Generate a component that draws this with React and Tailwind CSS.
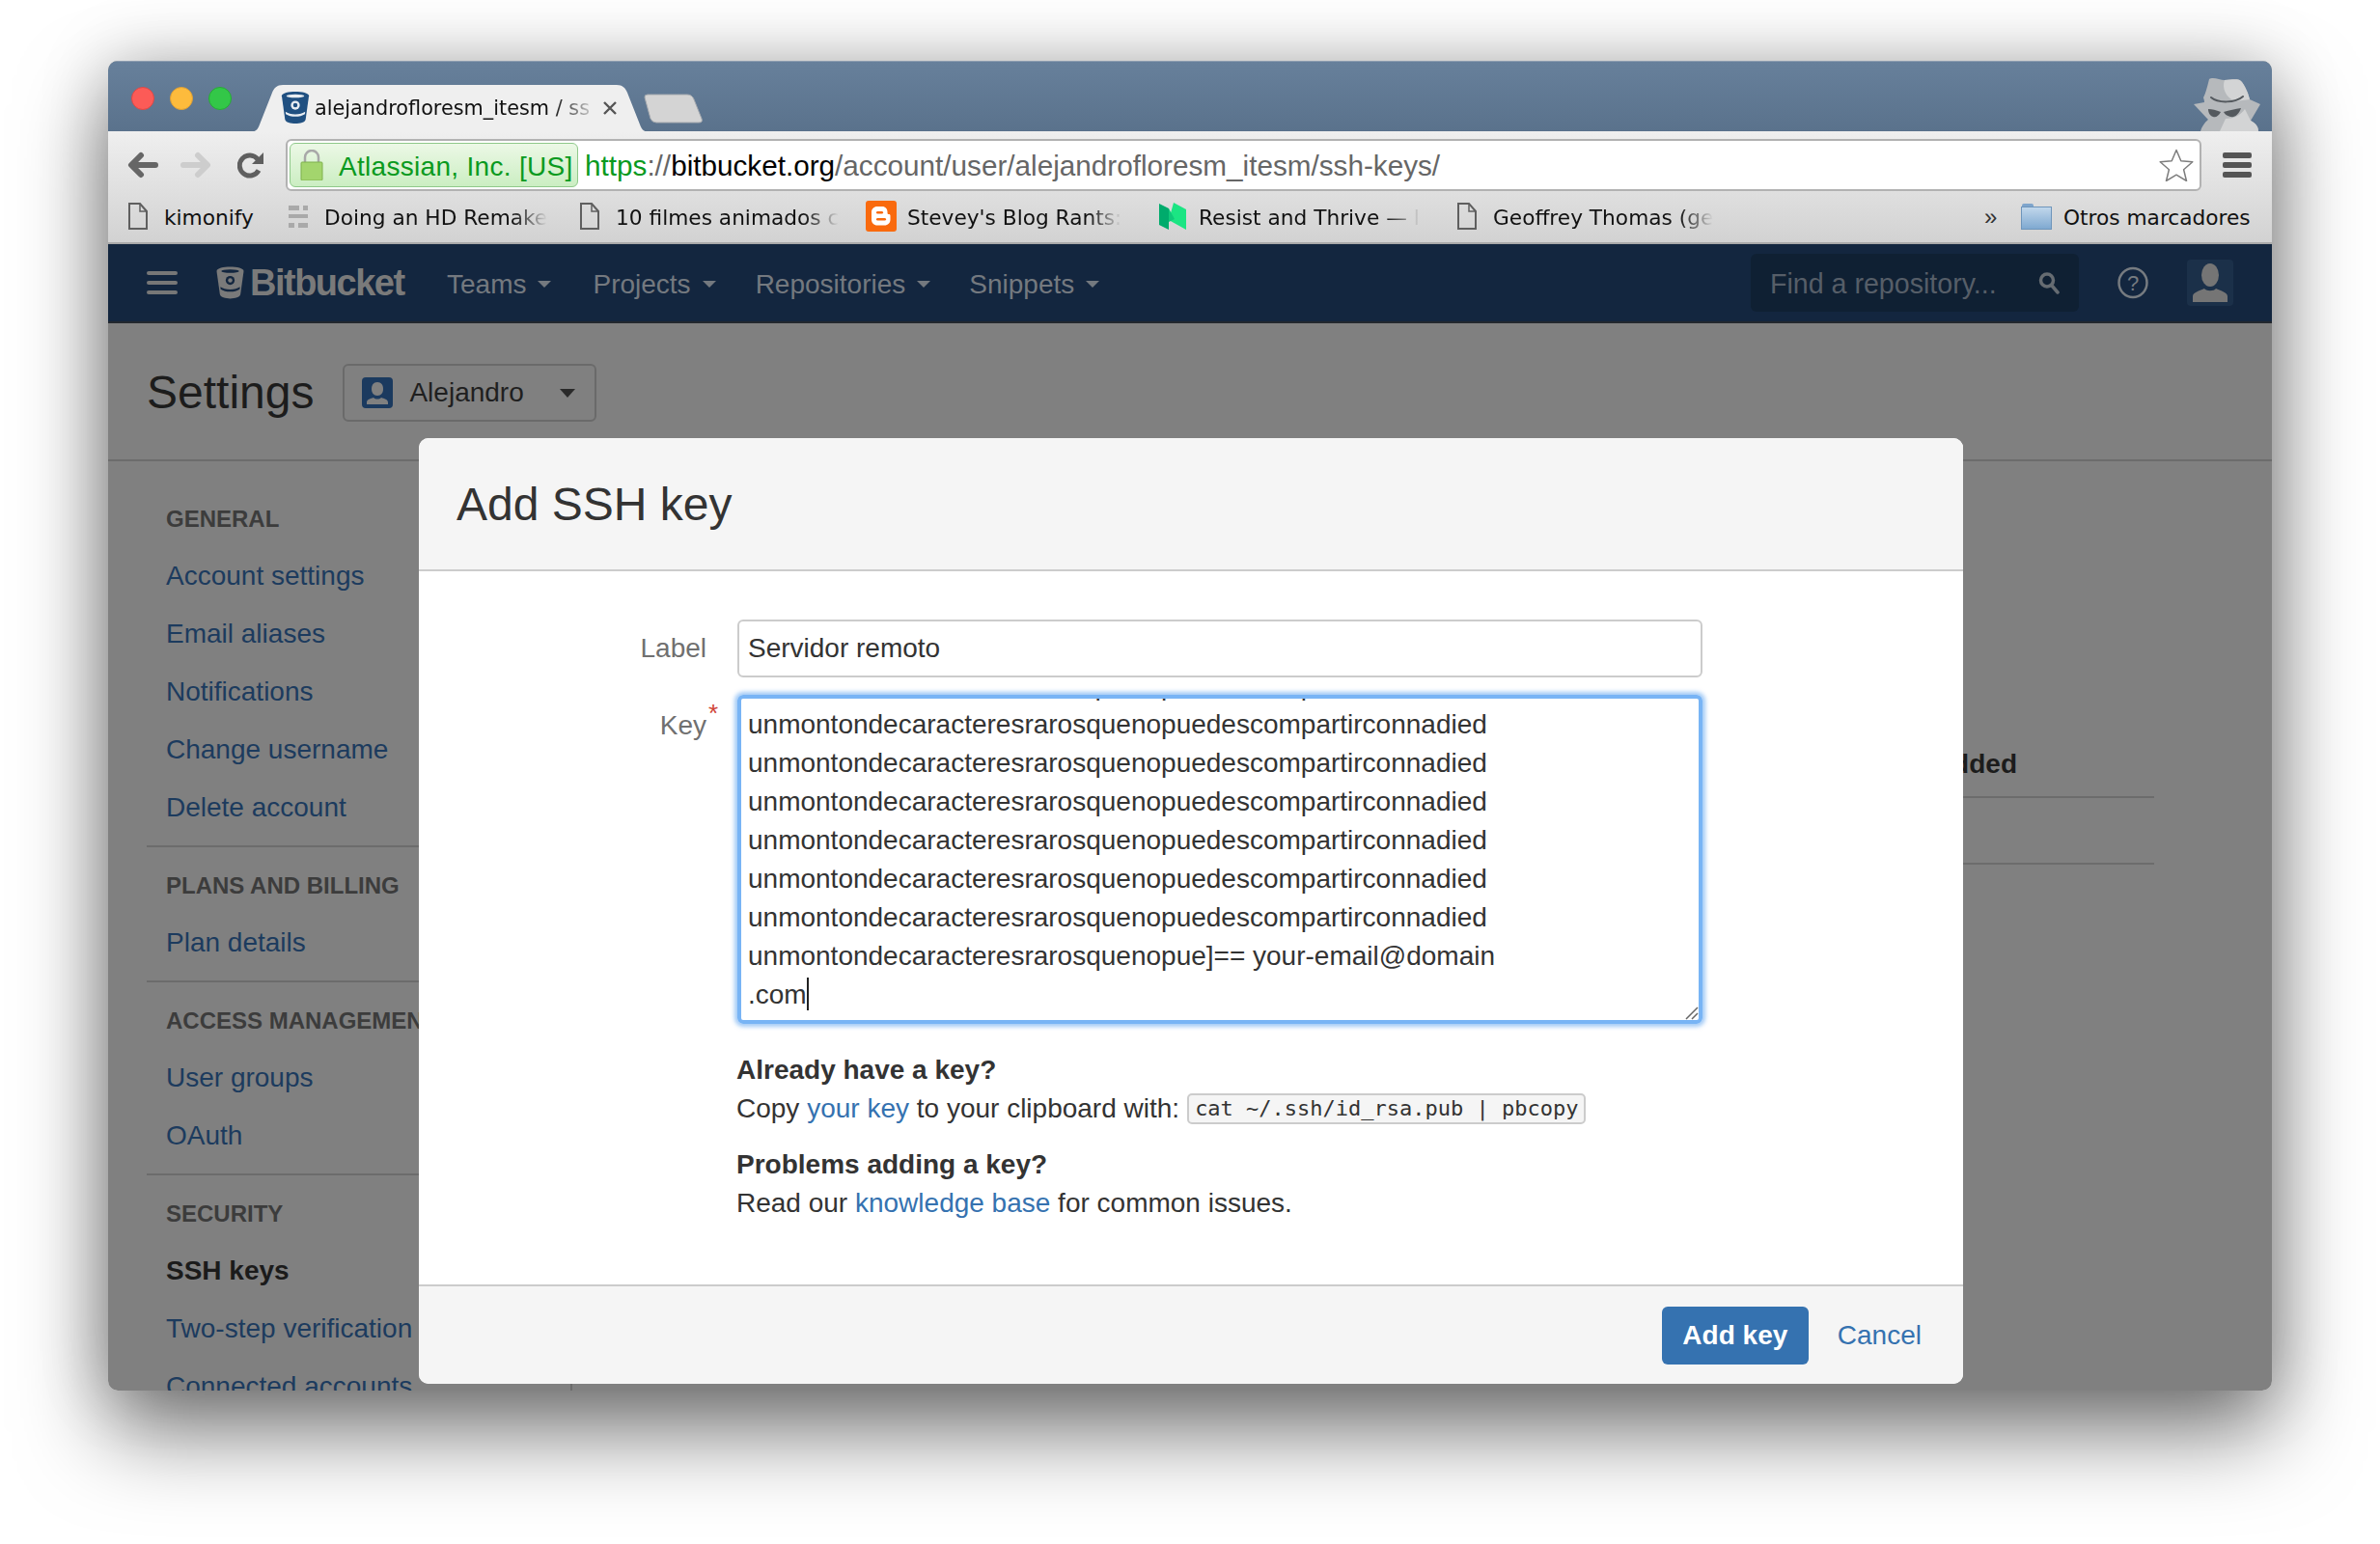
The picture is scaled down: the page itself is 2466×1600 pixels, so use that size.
import React from 'react';

const sans = 'font-["Liberation_Sans",Arial,sans-serif]';

const BucketIcon = ({ className, body, inner }) => (
  <svg viewBox="0 0 30 34" className={className}>
    <path d="M0.5 4.5C0.5 1.5 8 0 15 0s14.500 1.500 14.500 4.500L26 29.500C25.500 32.500 20 34 15 34S4.500 32.500 4 29.500Z" fill={body} />
    <ellipse cx="15" cy="4.600" rx="9.500" ry="1.800" fill={inner} />
    <path d="M4.500 21.500C9 25 21 25 25.500 21.500L25.200 24C20.500 27.500 9.500 27.500 4.800 24Z" fill={inner} />
    <circle cx="15" cy="14.500" r="4.800" fill={inner} />
    <circle cx="15" cy="14.500" r="2.300" fill={body} />
  </svg>
);

const DocIcon = () => (
  <svg viewBox="0 0 20 28" className="w-[20px] h-[28px]" fill="none" stroke="#5f5f5f" strokeWidth="2">
    <path d="M1 1h11l7 8v18H1Z" />
    <path d="M12 1v8h7" strokeWidth="1.500" />
  </svg>
);

const ListIcon = () => (
  <svg viewBox="0 0 20 28" className="w-[20px] h-[28px]" fill="#a9a9a9">
    <rect x="0" y="3" width="11" height="5" />
    <rect x="15" y="3" width="5" height="5" />
    <rect x="0" y="12" width="20" height="4" />
    <rect x="0" y="21" width="6" height="5" />
    <rect x="10" y="21" width="10" height="5" />
  </svg>
);

const BloggerIcon = () => (
  <svg viewBox="0 0 32 32" className="w-[32px] h-[32px]">
    <rect width="32" height="32" rx="3" fill="#f96a0e" />
    <path d="M12 6h5c3.500 0 5.500 2.500 5.500 5.500v1c0 1 .6 1.500 1.500 1.500.8 0 1.500.5 1.500 1.500v4c0 3.500-2.500 6-6 6H12c-3.500 0-6-2.500-6-6v-8C6 8.500 8.500 6 12 6Z" fill="#fff" />
    <rect x="11" y="11" width="7" height="2.500" rx="1.200" fill="#f96a0e" />
    <rect x="11" y="18" width="10" height="2.500" rx="1.200" fill="#f96a0e" />
  </svg>
);

const MediumIcon = () => (
  <svg viewBox="0 0 28 28" className="w-[28px] h-[28px]">
    <path d="M0 1l10 5v22L0 23Z" fill="#00ab6c" />
    <path d="M15 0l13 7v21L10 18Z" fill="#1be583" />
    <path d="M10 6l6 11-6 3Z" fill="#0fc97a" />
  </svg>
);

const FolderIcon = () => (
  <svg viewBox="0 0 32 28" className="w-[32px] h-[28px]">
    <path d="M1 3q0-2 2-2h8q2 0 2 2v1H1Z" fill="#7fa5cc" />
    <defs>
      <linearGradient id="folderFill" x1="0" y1="0" x2="0" y2="1">
        <stop offset="0" stopColor="#c2d8ec" />
        <stop offset="1" stopColor="#7ea8d0" />
      </linearGradient>
    </defs>
    <rect x="0.500" y="4.500" width="31" height="23" fill="url(#folderFill)" stroke="#6e95bb" />
  </svg>
);

const Bookmark = ({ icon, text, className, fade }) => (
  <div className={`flex items-center shrink-0 ${className}`}>
    <div className="w-[37px] flex items-center">{icon}</div>
    <span
      className={`whitespace-nowrap pt-[4px] font-["DejaVu_Sans",sans-serif] text-[21.700px] ${
        fade ? 'bg-linear-to-r from-[#111] from-[84%] to-[#d8d8d8] bg-clip-text text-transparent' : 'text-[#111]'
      }`}
    >
      {text}
    </span>
  </div>
);

const Caret = ({ className }) => (
  <span className={`inline-block w-0 h-0 border-x-[7px] border-x-transparent border-t-[7px] ${className}`} />
);

const NavLink = ({ children, className }) => (
  <div className={`flex items-center gap-[12px] pt-[3px] text-[28px] text-[#74797f] ${className}`}>
    {children}
    <Caret className="border-t-[#74797f]" />
  </div>
);

const SideHeading = ({ children }) => (
  <div className="h-[59px] flex items-center text-[24px] font-bold text-[#3c3c3c] whitespace-nowrap">{children}</div>
);

const SideLink = ({ children, active }) => (
  <div className={`h-[60px] flex items-center text-[28px] whitespace-nowrap ${active ? 'font-bold text-[#1b1b1b]' : 'text-[#1c3b5e]'}`}>
    {children}
  </div>
);

const SideSection = ({ title, items, last }) => (
  <div className={`-ml-[20px] pl-[20px] ${last ? '' : 'pb-[9px] mb-[10px] border-b-2 border-[#6c6c6c]'}`}>
    <SideHeading>{title}</SideHeading>
    {items.map((it) => (
      <SideLink key={it} active={it === 'SSH keys'}>{it}</SideLink>
    ))}
  </div>
);

const keyLine = 'unmontondecaracteresrarosquenopuedescompartirconnadied';

export default function App() {
  return (
    <div className={`w-[2466px] h-[1600px] bg-white pt-[63px] pl-[112px] overflow-hidden ${sans}`}>
      <div className="relative w-[2242px] h-[1378px] rounded-[10px] shadow-[0_44px_90px_rgba(0,0,0,0.5),0_0_70px_rgba(0,0,0,0.22)]">
        <div className="relative w-full h-full rounded-[10px] overflow-hidden flex flex-col bg-[#808080]">
          {/* title bar */}
          <div className="h-[73px] shrink-0 flex items-start bg-linear-to-b from-[#67809b] to-[#5a728c] border-t border-[#8d9db0] relative">
            <div className="flex gap-[16px] pl-[24px] pt-[26px]">
              <span className="w-[24px] h-[24px] rounded-full bg-[#fc5b57] border border-[#df4744]" />
              <span className="w-[24px] h-[24px] rounded-full bg-[#fdbb3c] border border-[#de9f34]" />
              <span className="w-[24px] h-[24px] rounded-full bg-[#33c748] border border-[#27aa35]" />
            </div>
            {/* tab */}
            <div className="relative ml-[18px] mt-[24px] w-[416px] h-[48px] shrink-0">
              <svg viewBox="0 0 416 49" className="absolute inset-0 w-[416px] h-[49px]">
                <path d="M0 49c6 0 9-2 11-8L24 8c2-5 5-8 11-8h346c6 0 9 3 11 8l13 33c2 6 5 8 11 8Z" fill="#efefef" />
              </svg>
              <div className="relative h-full flex items-center pl-[33px] pr-[35px]">
                <BucketIcon className="w-[30px] h-[33px] -mt-[1px] shrink-0" body="#205081" inner="#e8edf2" />
                <span className={`ml-[5px] whitespace-nowrap pt-[1px] font-["DejaVu_Sans",sans-serif] text-[20.800px] bg-linear-to-r from-[#111] from-[86%] to-[#c4c4c4] bg-clip-text text-transparent`}>
                  alejandrofloresm_itesm / ss
                </span>
                <svg viewBox="0 0 14 14" className="w-[14px] h-[14px] ml-auto shrink-0" stroke="#555" strokeWidth="2.400">
                  <path d="M1 1l12 12M13 1L1 13" />
                </svg>
              </div>
            </div>
            <svg viewBox="0 0 62 31" className="w-[62px] h-[31px] ml-[-7px] mt-[33px] shrink-0">
              <path d="M1 4q-.5-3 3-3h41q5 0 7 5l8 20q1.500 4-3 4H13q-4 0-6-4Z" fill="#d4d4d4" stroke="#a5a9ae" />
            </svg>
            {/* incognito */}
            <svg viewBox="0 0 95 66" className="absolute right-[-1px] top-[6px] w-[95px] h-[66px]">
              <path d="M29 12C33 9 40 13 45 13c7 0 13-2 17 1 4 4 8 14 9 19l11 5-10 17c6 3 8 7 8 11H20c1-4 4-9 8-12L13 38l11-2c0-3-1-4-1-5 2-3 4-11 6-19Z" fill="#b6b9bc" />
              <path d="M45 13c7 0 13-2 17 1 4 4 8 14 9 19l-15 2c-10-4-14-14-11-22ZM40 66l6-13c8 0 15-3 20-10l6 12c6 3 8 7 8 11Z" fill="#d3d4d5" />
              <path d="M31 31c7 6 25 6 33-1" fill="none" stroke="#54595e" strokeWidth="2" strokeLinecap="round" />
              <path d="M28 43c4 0 8 1 13 3-2 4-5 6-8 5-3-1-5-4-5-8ZM44 46c6-2 12-3 18-4-2 6-6 10-11 9-4-1-6-3-7-5Z" fill="#54595e" />
            </svg>
          </div>

          {/* toolbar + bookmarks */}
          <div className="h-[117px] shrink-0 bg-linear-to-b from-[#efefef] to-[#d2d2d2] border-b-2 border-[#a9a9a9]">
            <div className="flex items-center h-[62px] pt-[8px]">
              <svg viewBox="0 0 32 28" className="w-[32px] h-[28px] ml-[20px]" fill="none" stroke="#666" strokeWidth="6" strokeLinecap="round" strokeLinejoin="round">
                <path d="M29 14H5M14 4L4 14l10 10" />
              </svg>
              <svg viewBox="0 0 32 28" className="w-[32px] h-[28px] ml-[23px]" fill="none" stroke="#cdcdcd" strokeWidth="6" strokeLinecap="round" strokeLinejoin="round">
                <path d="M3 14h24M18 4l10 10-10 10" />
              </svg>
              <svg viewBox="0 0 28 28" className="w-[28px] h-[28px] ml-[27px]">
                <path d="M22 19.500a10.500 10.500 0 1 1-1-11.500" fill="none" stroke="#5f5f5f" strokeWidth="5" />
                <path d="M27 1v12H15Z" fill="#5f5f5f" />
              </svg>
              {/* omnibox */}
              <div className="ml-[22px] w-[1985px] h-[54px] rounded-[6px] bg-white border-2 border-[#b2b2b2] flex items-center pl-[2px] pr-[6px]">
                <div className="w-[299px] h-[46px] shrink-0 rounded-[6px] border border-[#8fc98a] bg-linear-to-b from-[#ecf8e6] to-[#cbeec2] flex items-center pl-[10px]">
                  <svg viewBox="0 0 24 32" className="w-[24px] h-[32px] shrink-0">
                    <path d="M5 14V8a7 7 0 0 1 14 0v6" fill="none" stroke="#a8a8a8" strokeWidth="2.500" />
                    <rect x="1" y="13" width="22" height="19" rx="1" fill="#a3d56d" stroke="#7fb24f" />
                  </svg>
                  <span className="ml-[16px] pt-[3px] text-[28px] text-[#0a9a1e] tracking-[0.300px] whitespace-nowrap">Atlassian, Inc. [US]</span>
                </div>
                <div className="ml-[7px] pt-[3px] text-[29.700px] text-[#666] whitespace-nowrap flex-1">
                  <span className="text-[#0a9a1e]">https</span>://<span className="text-black">bitbucket.org</span>/account/user/alejandrofloresm_itesm/ssh-keys/
                </div>
                <svg viewBox="0 0 36 34" className="w-[36px] h-[34px] shrink-0">
                  <path d="M18 1.500l4.800 11.300 12 1-9.200 7.900 2.900 11.800L18 27.200 7.500 33.500l2.900-11.800-9.200-7.900 12-1Z" fill="#fff" stroke="#7d7d7d" strokeWidth="1.500" strokeLinejoin="round" />
                </svg>
              </div>
              <div className="ml-[22px] w-[30px] flex flex-col gap-[4px]">
                <span className="h-[6px] rounded-[2px] bg-[#555]" />
                <span className="h-[6px] rounded-[2px] bg-[#555]" />
                <span className="h-[6px] rounded-[2px] bg-[#555]" />
              </div>
            </div>
            <div className="flex items-center h-[53px] pl-[21px]">
              <Bookmark icon={<DocIcon />} text="kimonify" className="w-[166px]" />
              <Bookmark icon={<ListIcon />} text="Doing an HD Remake" className="w-[302px]" fade />
              <Bookmark icon={<DocIcon />} text="10 filmes animados c" className="w-[296px]" fade />
              <Bookmark icon={<BloggerIcon />} text="Stevey's Blog Rants:" className="w-[304px] gap-0 [&>div]:w-[43px]" fade />
              <Bookmark icon={<MediumIcon />} text="Resist and Thrive — I" className="w-[309px] [&>div]:w-[41px]" fade />
              <Bookmark icon={<DocIcon />} text="Geoffrey Thomas (ge" className="w-[554px]" fade />
              <span className="text-[#333] text-[24px] w-[38px] -ml-[8px]">»</span>
              <div className="flex items-center">
                <FolderIcon />
                <span className={`ml-[12px] pt-[4px] whitespace-nowrap font-["DejaVu_Sans",sans-serif] text-[21.700px] text-[#111]`}>Otros marcadores</span>
              </div>
            </div>
          </div>

          {/* site nav */}
          <div className="h-[82px] shrink-0 bg-[#13263f] border-b-2 border-[#23282e] flex items-center relative">
            <div className="ml-[40px] w-[32px] flex flex-col gap-[6px]">
              <span className="h-[4px] rounded-full bg-[#777]" />
              <span className="h-[4px] rounded-full bg-[#777]" />
              <span className="h-[4px] rounded-full bg-[#777]" />
            </div>
            <BucketIcon className="ml-[40px] w-[29px] h-[34px]" body="#7a7a7a" inner="#13263f" />
            <span className="ml-[6px] w-[165px] font-bold text-[38px] tracking-[-1.500px] text-[#7a7a7a]">Bitbucket</span>
            <NavLink className="ml-[39px]">Teams</NavLink>
            <NavLink className="ml-[43px]">Projects</NavLink>
            <NavLink className="ml-[41px]">Repositories</NavLink>
            <NavLink className="ml-[40px]">Snippets</NavLink>
            <div className="ml-auto mr-[40px] flex items-center">
              <div className="w-[340px] h-[60px] rounded-[6px] bg-[#0f2033] flex items-center justify-between pl-[20px] pr-[20px] text-[28.600px] text-[#565e68]">
                <span className="pt-[3px]">Find a repository...</span>
                <svg viewBox="0 0 22 24" className="w-[22px] h-[24px]" fill="none" stroke="#666c72" strokeWidth="3.500" strokeLinecap="round">
                  <circle cx="9" cy="9.500" r="6.500" />
                  <path d="M14 15l6 7" />
                </svg>
              </div>
              <svg viewBox="0 0 32 34" className="ml-[40px] w-[32px] h-[34px]" fill="none" stroke="#767b80" strokeWidth="2.500">
                <ellipse cx="16" cy="17" rx="14.500" ry="15" />
                <text x="16" y="25" textAnchor="middle" fontSize="22" fill="#767b80" stroke="none" fontFamily="Liberation Sans">?</text>
              </svg>
              <div className="ml-[40px] w-[48px] h-[48px] rounded-[4px] bg-[#1b3049] flex items-center justify-center">
                <svg viewBox="0 0 36 40" className="w-[36px] h-[40px]" fill="#757575">
                  <ellipse cx="18" cy="12" rx="9" ry="12" />
                  <path d="M0 40v-6c0-4 8-6 12-8 2 3 10 3 12 0 4 2 12 4 12 8v6Z" />
                </svg>
              </div>
            </div>
          </div>

          {/* page behind the dialog */}
          <div className="h-[143px] shrink-0 border-b-2 border-[#6c6c6c] flex items-center pl-[40px] pt-[3px]">
            <h1 className="text-[48px] text-[#1c1c1c] leading-none">Settings</h1>
            <div className="ml-[30px] w-[263px] h-[60px] rounded-[6px] border-2 border-[#6a6a6a] flex items-center pl-[18px]">
              <div className="w-[32px] h-[32px] rounded-[4px] bg-[#1b3a5f] flex items-end justify-center overflow-hidden">
                <svg viewBox="0 0 32 32" className="w-[32px] h-[32px]" fill="#808080">
                  <path d="M16 5c-4 0-6 3-6 7s2 7 6 7 6-3 6-7-2-7-6-7Z" />
                  <path d="M5 28v-2c0-3 4-4 7-5 2 2 6 2 8 0 3 1 7 2 7 5v2Z" />
                </svg>
              </div>
              <span className="ml-[17px] text-[28px] text-[#1f1f1f]">Alejandro</span>
              <span className="ml-auto mr-[20px] w-0 h-0 border-x-[8px] border-x-transparent border-t-[9px] border-t-[#2a2a2a]" />
            </div>
          </div>
          <div className="flex flex-1 min-h-0">
            <div className="w-[479px] shrink-0 pl-[60px] pt-[30px]">
              <SideSection title="GENERAL" items={['Account settings', 'Email aliases', 'Notifications', 'Change username', 'Delete account']} />
              <SideSection title="PLANS AND BILLING" items={['Plan details']} />
              <SideSection title="ACCESS MANAGEMENT" items={['User groups', 'OAuth']} />
              <SideSection title="SECURITY" items={['SSH keys', 'Two-step verification', 'Connected accounts']} last />
            </div>
            <div className="w-[1641px] shrink-0 border-l-2 border-[#6c6c6c] pt-[291px]">
              <div className="h-[58px] pr-[142px] pb-[10px] flex items-center justify-end text-[28px] font-bold text-[#1c1c1c] border-b-2 border-[#6c6c6c]">Added</div>
              <div className="h-[69px] border-b-2 border-[#6c6c6c]" />
            </div>
          </div>
        </div>

        {/* dialog */}
        <div className="absolute left-[322px] top-[391px] w-[1600px] h-[980px] rounded-[10px] bg-white flex flex-col overflow-hidden text-[#333]">
          <div className="h-[138px] shrink-0 bg-[#f5f5f5] border-b-2 border-[#ccc] flex items-center pl-[39px]">
            <h2 className="text-[48px] text-[#333] leading-none mt-[2px]">Add SSH key</h2>
          </div>
          <div className="flex-1 pt-[50px]">
            <div className="flex gap-[32px]">
              <label className="w-[298px] h-[60px] flex items-center justify-end text-[28px] text-[#707070]">Label</label>
              <div className="w-[1000px] h-[60px] rounded-[6px] border-2 border-[#ccc] flex items-center pl-[9px] text-[28px] text-[#333]">Servidor remoto</div>
            </div>
            <div className="flex gap-[32px] mt-[18px]">
              <label className="w-[298px] flex justify-end text-[28px] text-[#707070] pt-[11px] relative">
                Key
                <span className="absolute right-[-12px] top-[6px] text-[#d04437] text-[26px] leading-[26px]">*</span>
              </label>
              <div className="relative w-[1000px] h-[341px] rounded-[6px] border-[4px] border-[#78b4f5] shadow-[0_0_4px_3px_rgba(122,180,242,0.700)] overflow-hidden pl-[7px] flex flex-col justify-end pb-[6px] text-[28px] leading-[40px] text-[#333]">
                {[0, 1, 2, 3, 4, 5, 6].map((i) => (
                  <div key={i} className="whitespace-nowrap shrink-0">{keyLine}</div>
                ))}
                <div className="whitespace-nowrap shrink-0">unmontondecaracteresrarosquenopue]== your-email@domain</div>
                <div className="whitespace-nowrap shrink-0">.com<span className="inline-block w-[2px] h-[34px] bg-[#222] align-[-7px]" /></div>
                <svg viewBox="0 0 14 14" className="absolute right-[0px] bottom-[0px] w-[14px] h-[14px]" stroke="#666" strokeWidth="1.500">
                  <path d="M1 13L13 1M7 13l6-6" />
                </svg>
              </div>
            </div>
            <div className="ml-[329px] mt-[28px] text-[28px] leading-[40px] text-[#333]">
              <div className="font-bold">Already have a key?</div>
              <div className="flex items-center whitespace-nowrap">
                Copy&nbsp;<span className="text-[#3572b0]">your key</span>&nbsp;to your clipboard with:
                <code className={`ml-[8px] h-[32px] px-[6px] flex items-center rounded-[5px] border-2 border-[#ccc] bg-[#f5f5f5] font-["DejaVu_Sans_Mono",monospace] text-[22px] text-[#333]`}>cat ~/.ssh/id_rsa.pub | pbcopy</code>
              </div>
              <div className="font-bold mt-[18px]">Problems adding a key?</div>
              <div>
                Read our <span className="text-[#3572b0]">knowledge base</span> for common issues.
              </div>
            </div>
          </div>
          <div className="h-[103px] shrink-0 bg-[#f5f5f5] border-t-2 border-[#ccc] flex items-center justify-end pr-[43px]">
            <button className="w-[152px] h-[60px] rounded-[6px] bg-[#3572b0] text-white text-[28px] font-bold">Add key</button>
            <span className="ml-[30px] text-[28px] text-[#3572b0]">Cancel</span>
          </div>
        </div>
      </div>
    </div>
  );
}
